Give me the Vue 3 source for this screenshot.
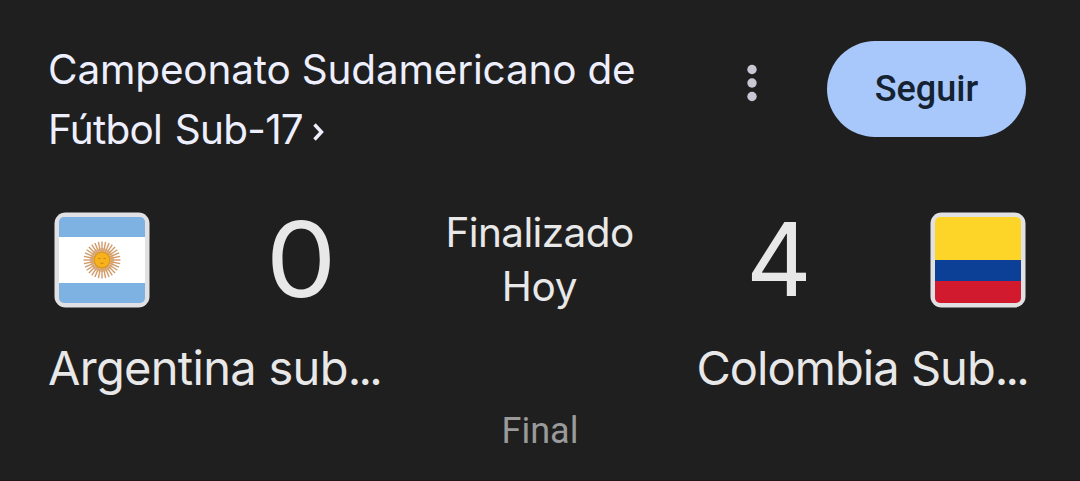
<template>
  <div class="match-card">
    <header class="header">
      <h1 class="title">
        <span class="title-line">Campeonato Sudamericano de</span>
        <span class="title-line second">
          Fútbol Sub-17
          <svg class="chevron" width="14" height="22" viewBox="0 0 14 22">
            <path d="M2.5 3.5 L9.5 11 L2.5 18.5" />
          </svg>
        </span>
      </h1>
      <svg class="more" width="12" height="40" viewBox="0 0 12 40">
        <circle v-for="cy in [6.5, 20, 33.5]" :key="cy" cx="6" :cy="cy" r="4.7" />
      </svg>
      <button class="follow">Seguir</button>
    </header>

    <section class="scoreboard">
      <svg class="flag" width="96" height="96" viewBox="0 0 96 96">
        <defs>
          <clipPath id="clip-ar"><rect x="5" y="5" width="86" height="86" rx="5" /></clipPath>
        </defs>
        <rect class="frame" x="0.5" y="0.5" width="95" height="95" rx="11" />
        <g clip-path="url(#clip-ar)">
          <rect width="96" height="96" fill="#7eb2e2" />
          <rect y="25" width="96" height="46" fill="#fff" />
        </g>
        <circle cx="48" cy="48" r="12" fill="#d9a05c" opacity="0.6" />
        <path
          v-for="angle in rays"
          :key="angle"
          class="ray"
          d="M48 39 L48 29.5"
          :transform="`rotate(${angle} 48 48)`"
        />
        <circle cx="48" cy="48" r="8" fill="#f7b21c" stroke="#d9942a" stroke-width="1.4" />
        <path class="face" d="M44 46.5h2.6 M49.4 46.5h2.6 M46.5 51.3h3" />
      </svg>
      <div class="score home"><span class="wide">0</span></div>
      <div class="status">
        <div class="finished">Finalizado</div>
        <div class="today">Hoy</div>
      </div>
      <div class="score away">4</div>
      <svg class="flag" width="96" height="96" viewBox="0 0 96 96">
        <defs>
          <clipPath id="clip-co"><rect x="5" y="5" width="86" height="86" rx="5" /></clipPath>
        </defs>
        <rect class="frame" x="0.5" y="0.5" width="95" height="95" rx="11" />
        <g clip-path="url(#clip-co)">
          <rect width="96" height="48" fill="#fdd428" />
          <rect y="48" width="96" height="21" fill="#0b4096" />
          <rect y="69" width="96" height="27" fill="#d11a2d" />
        </g>
      </svg>
    </section>

    <section class="teams">
      <div class="team home-name">Argentina sub<span class="dots">...</span></div>
      <div class="team away-name">Colombia Sub<span class="dots">...</span></div>
    </section>
    <footer class="stage">Final</footer>
  </div>
</template>

<script setup>
// Sol de Mayo: 32 rayos
const rays = Array.from({ length: 32 }, (_, i) => i * 11.25);
</script>

<style>
body {
  margin: 0;
  background: #1f1f1f;
}
</style>

<style scoped>
.match-card {
  box-sizing: border-box;
  width: 1080px;
  height: 481px;
  padding: 39px 54px 0 49px;
  overflow: hidden;
  border-bottom: 1px solid #1d151a;
  background: #1f1f1f;
  color: #e8e8e8;
  font-family: Inter, "Liberation Sans", sans-serif;
}

.header {
  display: flex;
  align-items: flex-start;
  height: 173px;
}

.title {
  width: 698px;
  margin: 1px 0 0 -1px;
  color: #eeeffe;
  font-size: 40.5px;
  font-weight: 400;
  line-height: 60px;
  letter-spacing: -0.18px;
}

.title-line {
  display: flex;
  align-items: center;
  white-space: nowrap;
}

.second {
  letter-spacing: -0.75px;
  word-spacing: 2px;
}

.chevron {
  margin: 4px 0 0 9px;
}

.chevron path {
  fill: none;
  stroke: #eeeffe;
  stroke-width: 3.4;
}

.more {
  margin-top: 24px;
  fill: #c8c8d4;
}

.follow {
  width: 199px;
  height: 96px;
  margin: 2px 0 0 auto;
  padding: 0;
  border: 0;
  border-radius: 48px;
  background: #a8c7fa;
  color: #142232;
  font: 500 36px/96px Roboto, sans-serif;
}

.scoreboard {
  display: flex;
  height: 124px;
  margin-left: 5px;
}

.flag {
  flex: none;
}

.frame {
  fill: #e1e1e3;
}

.ray {
  stroke: #d09a68;
  stroke-width: 1.4;
}

.face {
  fill: none;
  stroke: #cf8a1c;
  stroke-width: 1.2;
}

.score {
  width: 110px;
  font-size: 102px;
  line-height: 95px;
  text-align: center;
}

.wide {
  display: inline-block;
  transform: scale(1.1, 1.02);
}

.home {
  margin-left: 96px;
}

.away {
  margin-right: 96px;
  margin-left: 1px;
}

.status {
  flex: 1;
  margin-top: -6px;
  font-size: 40.5px;
  line-height: 54px;
  letter-spacing: -0.6px;
  text-align: center;
}

.today {
  letter-spacing: -0.3px;
}

.teams {
  display: flex;
  justify-content: space-between;
  height: 67px;
  margin-right: -2px;
  margin-left: -1px;
  font-size: 47px;
  line-height: 63px;
  letter-spacing: -0.7px;
}

.team {
  white-space: nowrap;
}

.away-name {
  letter-spacing: -0.95px;
}

.dots {
  letter-spacing: -2.8px;
}

.away-name .dots {
  margin-right: 1px;
}

.stage {
  margin-left: -5px;
  margin-right: -10px;
  color: #9a9a9a;
  font: 400 36px/56px Roboto, sans-serif;
  text-align: center;
}
</style>
